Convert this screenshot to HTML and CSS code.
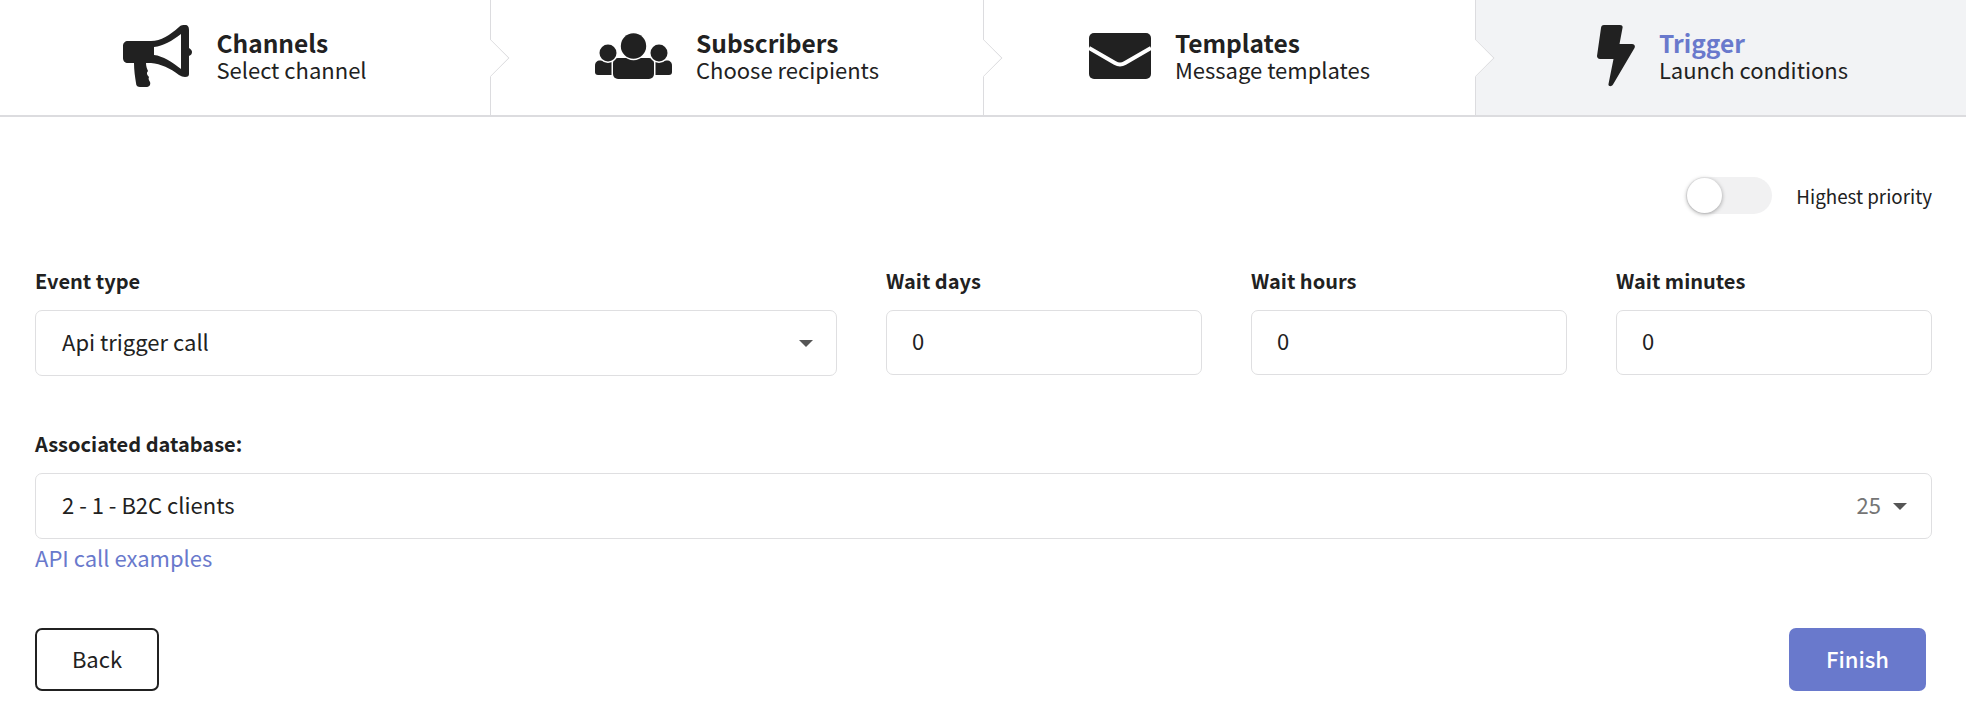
FILE: index.html
```html
<!DOCTYPE html>
<html lang="en">
<head>
<meta charset="utf-8">
<title>Trigger</title>
<link rel="stylesheet" href="styles.css">
</head>
<body>
<nav class="steps">
  <div class="step">
    <svg class="icon icon-horn" viewBox="0 0 69 62"><path fill-rule="evenodd" d="M5 16H28C38 16 47 10 56 2C58 0 60 0 62 0C65 0 66 2 66 5V23C68 24 69 26 69 27C69 29 68 30 66 31V49C66 51 65 52 62 52C60 52 58 51 56 50C47 43 38 39 28 38H23C23 41 24 44 25 46C23 48 24 50 26 52C25 54 26 55 27 57C28 60 26 62 23 62H17C15 62 13 61 13 58C12 52 11 45 11 38H5C2 38 0 36 0 33V21C0 18 2 16 5 16ZM31 22V30C40 31 49 37 58 44V9C49 16 40 21 31 22Z"/></svg>
    <div class="step-text"><div class="step-title">Channels</div><div class="step-sub">Select channel</div></div>
  </div>
  <div class="step">
    <svg class="icon icon-users" viewBox="0 0 77 46"><path d="M5 27.500H16.500V42H3C1 42 0 41 0 39V32.500C0 29.500 2 27.500 5 27.500Z"/><path d="M72 27.500H60.500V42H74C76 42 77 41 77 39V32.500C77 29.500 75 27.500 72 27.500Z"/><rect x="18" y="25" width="41" height="21" rx="5"/><circle class="halo" cx="13" cy="20" r="8.500"/><circle class="halo" cx="64" cy="20" r="8.500"/><circle class="halo" cx="38.500" cy="13" r="12.700"/></svg>
    <div class="step-text"><div class="step-title">Subscribers</div><div class="step-sub">Choose recipients</div></div>
  </div>
  <div class="step">
    <svg class="icon icon-mail" viewBox="0 0 62 46"><rect width="62" height="46" rx="5"/><path class="mail-flap" d="M0 15L26 30Q31 33 36 30L62 15"/></svg>
    <div class="step-text"><div class="step-title">Templates</div><div class="step-sub">Message templates</div></div>
  </div>
  <div class="step step-active">
    <svg class="icon icon-bolt" viewBox="0 0 38 62"><path d="M7 0H23C25 0 26 1 25.500 3L22.500 19H35C37.500 19 38.500 21 37.500 23L16 59.500C14.500 62 11 61.500 11.500 59L16.500 34H3C1 34 0 32.500 0 31L4 3C4.300 1 5 0 7 0Z"/></svg>
    <div class="step-text"><div class="step-title">Trigger</div><div class="step-sub">Launch conditions</div></div>
  </div>
</nav>
<main class="form">
  <div class="priority">
    <span class="toggle"><span class="toggle-thumb"></span></span>
    <span class="priority-label">Highest priority</span>
  </div>
  <div class="fields">
    <div class="field">
      <label class="label">Event type</label>
      <div class="control control-select"><span class="control-text">Api trigger call</span><span class="caret"></span></div>
    </div>
    <div class="field">
      <label class="label">Wait days</label>
      <div class="control control-input"><span class="control-text">0</span></div>
    </div>
    <div class="field">
      <label class="label">Wait hours</label>
      <div class="control control-input"><span class="control-text">0</span></div>
    </div>
    <div class="field">
      <label class="label">Wait minutes</label>
      <div class="control control-input"><span class="control-text">0</span></div>
    </div>
  </div>
  <div class="database">
    <label class="label">Associated database:</label>
    <div class="control control-select control-db"><span class="control-text">2 - 1 - B2C clients</span><span class="db-end"><span class="control-text count">25</span><span class="caret"></span></span></div>
    <a class="link" href="#">API call examples</a>
  </div>
  <div class="actions">
    <button class="btn btn-back" type="button">Back</button>
    <button class="btn btn-finish" type="button">Finish</button>
  </div>
</main>
</body>
</html>
```

FILE: styles.css
```css
* { box-sizing: border-box; }
html, body { margin: 0; padding: 0; }
body {
  background: #fff;
  color: #212121;
  font-family: "Noto Sans CJK SC", "Noto Sans", sans-serif;
  font-size: 20px;
  overflow: hidden;
}
.steps {
  display: grid;
  grid-template-columns: 491px 493px 492px 1fr;
  height: 117px;
  border-bottom: 2px solid #dcdcdf;
}
.step {
  position: relative;
  display: flex;
  align-items: center;
  justify-content: center;
  gap: 24px;
  border-right: 1px solid #dcdcdf;
}
.step:last-child { border-right: 0; }
.step:not(:last-child)::after {
  content: "";
  position: absolute;
  top: 44px;
  right: -14px;
  width: 27px;
  height: 27px;
  background: #fff;
  border-top: 1px solid #dcdcdf;
  border-right: 1px solid #dcdcdf;
  transform: rotate(45deg);
  z-index: 1;
  clip-path: polygon(0 0, 100% 0, 100% 100%);
}
.step-active { background: #f2f3f5; padding-left: 3px; }
.icon { flex: none; fill: #212121; margin-bottom: 3px; }
.icon-horn { width: 69px; height: 62px; }
.icon-users { width: 77px; height: 46px; }
.icon-mail { width: 62px; height: 46px; }
.icon-bolt { width: 38px; height: 62px; }
.halo { stroke: #fff; stroke-width: 3; paint-order: stroke; }
.mail-flap { fill: none; stroke: #fff; stroke-width: 4; }
.step-text { padding-bottom: 2px; }
.step-title { font-size: 24.5px; font-weight: 700; line-height: 26px; }
.step-active .step-title { color: #6979cc; }
.step-sub { font-size: 22px; line-height: 27px; }
.form { padding: 60px 34px 0 35px; }
.priority {
  display: flex;
  justify-content: flex-end;
  align-items: center;
  gap: 24px;
  height: 37px;
}
.toggle {
  position: relative;
  width: 86px;
  height: 37px;
  border-radius: 19px;
  background: #f1f1f2;
}
.toggle-thumb {
  position: absolute;
  top: 1px;
  left: 1px;
  width: 35px;
  height: 35px;
  border-radius: 50%;
  background: #fff;
  box-shadow: 0 1px 4px rgba(0, 0, 0, .35);
}
.priority-label { font-size: 18.8px; line-height: 28px; }
.fields {
  display: grid;
  grid-template-columns: 802px repeat(3, 316px);
  gap: 49px;
  margin-top: 53px;
}
.label {
  display: block;
  font-size: 20px;
  font-weight: 700;
  line-height: 28px;
  margin-bottom: 15px;
}
.control {
  height: 66px;
  border: 1px solid #dfdfe1;
  border-radius: 7px;
  font-size: 22px;
  display: flex;
  align-items: center;
  padding: 0 25px;
}
.control-text { margin-bottom: 5px; }
.control-input { height: 65px; }
.control-select { justify-content: space-between; padding: 0 23px 0 26px; }
.control-db { padding-right: 24px; }
.caret {
  display: inline-block;
  width: 0;
  height: 0;
  border-left: 7px solid transparent;
  border-right: 7px solid transparent;
  border-top: 7px solid #555;
}
.db-end { display: flex; align-items: center; gap: 12px; }
.count { color: #757575; }
.database { margin-top: 54px; }
.link {
  display: block;
  color: #6979cc;
  text-decoration: none;
  font-size: 22px;
  line-height: 31px;
  margin-top: 3px;
}
.actions {
  display: flex;
  justify-content: space-between;
  margin-top: 55px;
  padding-right: 6px;
}
.btn {
  height: 63px;
  padding: 0 0 4px;
  font: inherit;
  font-size: 22px;
  border-radius: 7px;
  cursor: pointer;
}
.btn-back {
  width: 124px;
  background: #fff;
  color: #212121;
  border: 2px solid #212121;
}
.btn-finish {
  width: 137px;
  background: #6979cc;
  color: #fff;
  border: 0;
  font-weight: 500;
}
```
